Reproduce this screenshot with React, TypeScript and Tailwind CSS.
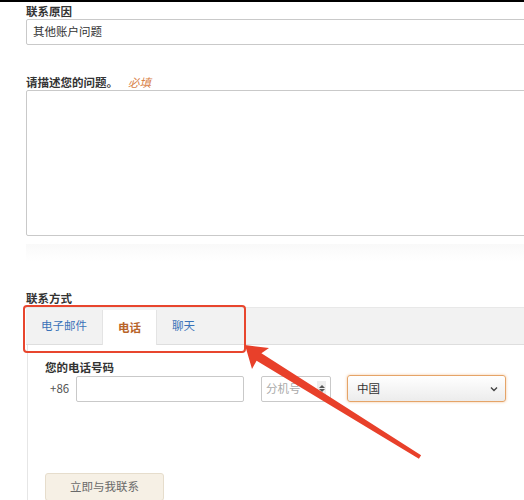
import React from "react";

const font = { fontFamily: '"Noto Sans CJK SC", "Noto Sans", sans-serif' };

const Label = ({ children }: { children: React.ReactNode }) => (
    <div className="text-[11.5px] leading-[14px] font-bold text-[#333]">{children}</div>
);

const Tabs = () => {
    const tabs = ['电子邮件', '电话', '聊天'];
    return (
        <div className="flex h-[38px] bg-[#f2f2f2] border-t border-[#e8e8e8] border-b border-b-[#dedede]">
            {tabs.map((t) => (
                <div key={t}
                    className={`px-[15px] flex items-center text-[11.5px] ${t === '电话'
                        ? 'bg-white text-[#b8642a] font-bold -mb-px mt-[2px] border-x border-[#e4e4e4]'
                        : 'text-[#3a72b8]'}`}
                >
                    {t}
                </div>
            ))}
        </div>
    );
};

export default function App() {
    return (
        <div className="relative w-[524px] h-[500px] overflow-hidden bg-white" style={font}>
            <div className="h-[2px] bg-black" />
            <div className="ml-[26px] w-[620px] flex flex-col">
                <div className="mt-[2px]">
                    <Label>联系原因</Label>
                </div>
                <div className="mt-px h-[26px] border border-[#c9c9c9] rounded-[2px] flex items-center px-[6px] text-[11.5px] text-[#333]">
                    其他账户问题
                </div>

                <div className="mt-[30px] flex items-center gap-[10px]">
                    <Label>请描述您的问题。</Label>
                    <span className="text-[11.5px] leading-[14px] italic text-[#d98248]">必填</span>
                </div>
                <div className="mt-px h-[146px] border border-[#c9c9c9] rounded-[2px]" />

                <div className="mt-[8px] h-[18px] bg-gradient-to-b from-[#f9f9f9] to-white" />

                <div className="mt-[29px]">
                    <Label>联系方式</Label>
                </div>
                <div className="mt-[2px]">
                    <Tabs />
                </div>

                <div className="ml-px border-l border-[#e6e6e6] pl-[17px] pt-[15px] h-[200px]">
                    <Label>您的电话号码</Label>
                    <div className="mt-px flex items-center">
                        <span className="pl-[5px] w-[31px] text-[11.5px] text-[#555]">+86</span>
                        <div className="w-[168px] h-[26px] border border-[#c9c9c9] rounded-[2px]" />
                        <div className="ml-[17px] w-[70px] h-[26px] border border-[#c9c9c9] rounded-[2px] flex items-center justify-between px-[4px]">
                            <span className="text-[11.5px] text-[#aaa]">分机号</span>
                            <div className="flex flex-col items-center justify-center w-[9px] h-[16px] bg-[#eee]">
                                <div className="w-0 h-0 border-x-[3px] border-x-transparent border-b-[3px] border-b-[#555]" />
                                <div className="mt-px w-0 h-0 border-x-[3px] border-x-transparent border-t-[3px] border-t-[#555]" />
                            </div>
                        </div>
                        <div className="ml-[16px] w-[159px] h-[27px] border border-[#e5a468] rounded-[3px] shadow-[0_0_3px_#f3c79c] bg-gradient-to-b from-white to-[#ececec] flex items-center justify-between pl-[9px] pr-[6px]">
                            <span className="text-[11.5px] text-[#333]">中国</span>
                            <svg width="10" height="10" viewBox="0 0 10 10">
                                <path d="M2 3.5 L5 6.5 L8 3.5" fill="none" stroke="#444" strokeWidth="1.4" />
                            </svg>
                        </div>
                    </div>
                    <div className="mt-[71px] w-[119px] h-[28px] border border-[#e6ddcc] rounded-[3px] bg-[#f6f0e5] flex items-center justify-center text-[11.5px] text-[#6a6a6a]">
                        立即与我联系
                    </div>
                </div>
            </div>

            {/* annotation */}
            <div className="absolute left-[23px] top-[305px] w-[223px] h-[48px] border-2 border-[#e8462e] rounded-[4px]" />
            <svg className="absolute left-0 top-0" width="524" height="500" viewBox="0 0 524 500">
                <polygon
                    points="245,345 269,348 261.4,353.2 421.1,455.3 418.9,458.7 256.6,360.8 252,369"
                    fill="#e8402a"
                />
            </svg>
        </div>
    );
}
